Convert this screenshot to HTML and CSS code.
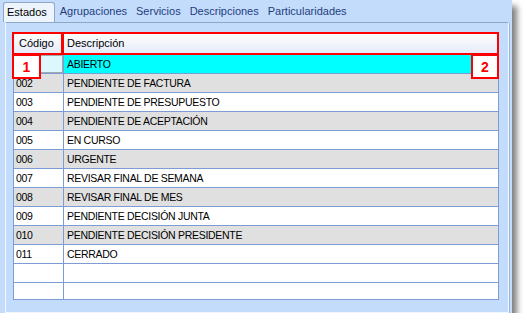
FILE: index.html
```html
<!DOCTYPE html>
<html lang="es">
<head>
  <meta charset="UTF-8">
  <title>Estados</title>
  <link rel="stylesheet" href="styles.css">
</head>
<body>
  <div class="window">
    <!-- Tab strip -->
    <div class="tabs">
      <span class="tab active">Estados</span>
      <span class="tab">Agrupaciones</span>
      <span class="tab">Servicios</span>
      <span class="tab">Descripciones</span>
      <span class="tab">Particularidades</span>
    </div>

    <div class="panel">
      <div class="grid">
        <div class="row head">
          <div class="c1">Código</div>
          <div class="c2">Descripción</div>
        </div>
        <div class="row selected"><div class="c1"></div><div class="c2">ABIERTO</div></div>
        <div class="row gray"><div class="c1">002</div><div class="c2">PENDIENTE DE FACTURA</div></div>
        <div class="row"><div class="c1">003</div><div class="c2">PENDIENTE DE PRESUPUESTO</div></div>
        <div class="row gray"><div class="c1">004</div><div class="c2">PENDIENTE DE ACEPTACIÓN</div></div>
        <div class="row"><div class="c1">005</div><div class="c2">EN CURSO</div></div>
        <div class="row gray"><div class="c1">006</div><div class="c2">URGENTE</div></div>
        <div class="row"><div class="c1">007</div><div class="c2">REVISAR FINAL DE SEMANA</div></div>
        <div class="row gray"><div class="c1">008</div><div class="c2">REVISAR FINAL DE MES</div></div>
        <div class="row"><div class="c1">009</div><div class="c2">PENDIENTE DECISIÓN JUNTA</div></div>
        <div class="row gray"><div class="c1">010</div><div class="c2">PENDIENTE DECISIÓN PRESIDENTE</div></div>
        <div class="row"><div class="c1">011</div><div class="c2">CERRADO</div></div>
        <div class="row"><div class="c1"></div><div class="c2"></div></div>
        <div class="row"><div class="c1"></div><div class="c2"></div></div>
      </div>
    </div>

    <!-- Red callouts drawn over the grid -->
    <div class="mark mark-code"></div>
    <div class="mark mark-desc"></div>
    <div class="callout callout-1">1</div>
    <div class="callout callout-2">2</div>
  </div>
</body>
</html>
```

FILE: styles.css
```css
body {
  margin: 0;
  background-color: #FFFFFF;
  font-family: 'Liberation Sans', Arial, sans-serif;
  font-size: 11px;
  color: #000000;
}

.window {
  position: relative;
  width: 512px;
  height: 313px;
  background-color: #C4DCFC;
  box-shadow: 5px 6px 6px rgba(0, 0, 0, 0.5);
  display: flex;
  flex-direction: column;
}

/* Tabs */
.tabs {
  display: flex;
  align-items: flex-end;
  height: 22px;
  padding-left: 3px;
  gap: 1px;
}

.tab {
  padding: 0 4px 4px 4px;
  color: #1E3E7C;
  line-height: 14px;
  font-size: 11px;
}

.tab.active {
  background-color: #EEF4FC;
  border: 1px solid #8FA6C4;
  border-bottom: none;
  border-radius: 3px 3px 0 0;
  padding: 2px 7px 3px 3px;
  color: #000000;
}

/* Tab page */
.panel {
  margin: 0 3px 0 5px;
  height: 286px;
  border: 1px solid #F2F7FE;
  border-top-color: #8FA6C4;
  box-shadow: 1px 1px 0 #9DB4D2;
  padding: 9px 10px 0 7px;
}

/* Grid */
.grid {
  width: 484px;
  height: 266px;
  overflow: hidden;
  background-color: #FFFFFF;
  border: 1px solid #7C9CD4;
}

.row {
  display: flex;
  height: 18px;
  border-bottom: 1px solid #7C9CD4;
  line-height: 18px;
  font-size: 10.5px;
  letter-spacing: -0.3px;
}

.row .c1 {
  width: 47px;
  padding-left: 2px;
  border-right: 1px solid #7C9CD4;
}

.row .c2 {
  flex: 1;
  padding-left: 3px;
}

.row.gray {
  background-color: #E0E0E0;
}

.row.selected .c1 {
  background-color: #DCF8FC;
  box-shadow: inset 0 0 0 1px #A0A8B0;
}

.row.selected .c2 {
  background-color: #00FFFF;
}

.head {
  height: 21px;
  line-height: 21px;
  font-size: 11px;
  letter-spacing: 0;
  background: linear-gradient(#FFFFFF, #E4EAF8);
}

.head .c1 {
  padding-left: 5px;
  width: 44px;
}

/* Annotations */
.mark {
  position: absolute;
  top: 32px;
  height: 23px;
  box-sizing: border-box;
  border: 2px solid #FF0000;
}

.mark-code {
  left: 12px;
  width: 51px;
}

.mark-desc {
  left: 62px;
  width: 437px;
}

.callout {
  position: absolute;
  top: 54px;
  height: 25px;
  box-sizing: border-box;
  border: 2px solid #FF0000;
  background-color: #FFFFFF;
  color: #FF0000;
  font-weight: bold;
  font-size: 14px;
  line-height: 22px;
  text-align: center;
}

.callout-1 {
  left: 12px;
  width: 29px;
}

.callout-2 {
  left: 471px;
  width: 28px;
}
```
